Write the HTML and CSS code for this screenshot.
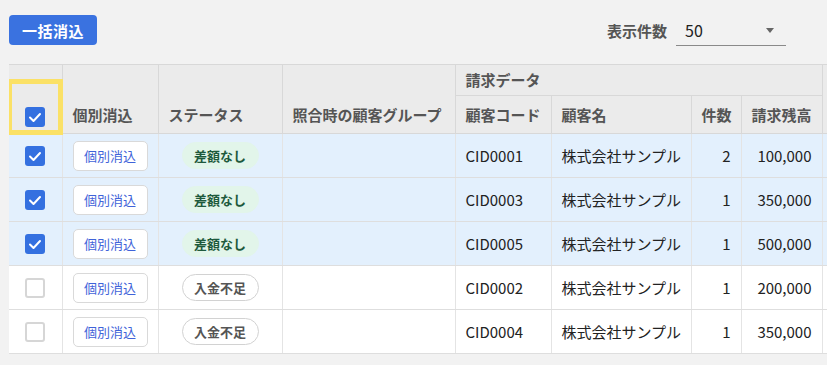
FILE: index.html
```html
<!DOCTYPE html>
<html lang="ja">
<head>
  <meta charset="UTF-8">
  <title>消込</title>
  <link rel="stylesheet" href="styles.css">
</head>
<body>
<div class="page">
  <div class="toolbar">
    <button class="bulk-btn">一括消込</button>
    <div class="per-page">
      <span class="per-page-label">表示件数</span>
      <div class="select">
        <span>50</span>
        <span class="caret"></span>
      </div>
    </div>
  </div>

  <div class="table-wrap">
    <table class="recon">
      <colgroup>
        <col style="width:53px">
        <col style="width:96px">
        <col style="width:124px">
        <col style="width:173px">
        <col style="width:96px">
        <col style="width:140px">
        <col style="width:50px">
        <col style="width:81px">
        <col style="width:100px">
      </colgroup>
      <thead>
        <tr class="head-top">
          <th rowspan="2" class="col-check">
            <span class="highlight"></span>
            <span class="cb checked"><svg viewBox="0 0 20 20"><polyline points="5,10.5 8.5,14 15,7"/></svg></span>
          </th>
          <th rowspan="2" class="bottom">個別消込</th>
          <th rowspan="2" class="bottom">ステータス</th>
          <th rowspan="2" class="bottom">照合時の顧客グループ</th>
          <th colspan="4" class="group">請求データ</th>
          <th rowspan="2"></th>
        </tr>
        <tr class="head-sub">
          <th class="bottom">顧客コード</th>
          <th class="bottom">顧客名</th>
          <th class="bottom num">件数</th>
          <th class="bottom num">請求残高</th>
        </tr>
      </thead>
      <tbody>
        <tr class="selected">
          <td class="col-check"><span class="cb checked"><svg viewBox="0 0 20 20"><polyline points="5,10.5 8.5,14 15,7"/></svg></span></td>
          <td class="center"><button class="row-btn">個別消込</button></td>
          <td class="center"><span class="badge ok">差額なし</span></td>
          <td></td>
          <td>CID0001</td>
          <td>株式会社サンプル</td>
          <td class="num">2</td>
          <td class="num">100,000</td>
          <td></td>
        </tr>
        <tr class="selected">
          <td class="col-check"><span class="cb checked"><svg viewBox="0 0 20 20"><polyline points="5,10.5 8.5,14 15,7"/></svg></span></td>
          <td class="center"><button class="row-btn">個別消込</button></td>
          <td class="center"><span class="badge ok">差額なし</span></td>
          <td></td>
          <td>CID0003</td>
          <td>株式会社サンプル</td>
          <td class="num">1</td>
          <td class="num">350,000</td>
          <td></td>
        </tr>
        <tr class="selected">
          <td class="col-check"><span class="cb checked"><svg viewBox="0 0 20 20"><polyline points="5,10.5 8.5,14 15,7"/></svg></span></td>
          <td class="center"><button class="row-btn">個別消込</button></td>
          <td class="center"><span class="badge ok">差額なし</span></td>
          <td></td>
          <td>CID0005</td>
          <td>株式会社サンプル</td>
          <td class="num">1</td>
          <td class="num">500,000</td>
          <td></td>
        </tr>
        <tr>
          <td class="col-check"><span class="cb"></span></td>
          <td class="center"><button class="row-btn">個別消込</button></td>
          <td class="center"><span class="badge short">入金不足</span></td>
          <td></td>
          <td>CID0002</td>
          <td>株式会社サンプル</td>
          <td class="num">1</td>
          <td class="num">200,000</td>
          <td></td>
        </tr>
        <tr>
          <td class="col-check"><span class="cb"></span></td>
          <td class="center"><button class="row-btn">個別消込</button></td>
          <td class="center"><span class="badge short">入金不足</span></td>
          <td></td>
          <td>CID0004</td>
          <td>株式会社サンプル</td>
          <td class="num">1</td>
          <td class="num">350,000</td>
          <td></td>
        </tr>
      </tbody>
    </table>
  </div>
</div>
</body>
</html>
```

FILE: styles.css
```css
* {
  margin: 0;
  padding: 0;
  box-sizing: border-box;
}
body {
  background-color: #f2f2f2;
  font-family: "Noto Sans CJK JP", "Noto Sans", sans-serif;
  color: #222;
  overflow: hidden;
}

.page {
  padding: 15px 0 0 9px;
}

/* 上のツールバー */
.toolbar {
  width: 777px;
  height: 30px;
  display: flex;
  justify-content: space-between;
  align-items: center;
}
.bulk-btn {
  height: 30px;
  padding: 0 13px;
  border: none;
  border-radius: 4px;
  background-color: #3a72e0;
  color: #fff;
  font-family: inherit;
  font-size: 15px;
  font-weight: 700;
  letter-spacing: 0.5px;
}
.per-page {
  display: flex;
  align-items: center;
  gap: 9px;
}
.per-page-label {
  font-size: 15px;
  font-weight: 700;
  color: #555;
}
.select {
  width: 110px;
  height: 31px;
  padding: 0 12px 0 9px;
  border-bottom: 1px solid #8a8a8a;
  display: flex;
  justify-content: space-between;
  align-items: center;
  font-size: 16px;
  color: #222;
  margin-top: 1px;
}
.caret {
  width: 0;
  height: 0;
  border-left: 4px solid transparent;
  border-right: 4px solid transparent;
  border-top: 5px solid #666;
}

/* テーブル */
.table-wrap {
  margin-top: 19px;
  overflow: hidden;
}
.recon {
  table-layout: fixed;
  width: 913px;
  border-collapse: collapse;
  font-size: 15px;
}
.recon th {
  background-color: #ebebeb;
  border: 1px solid #d8d8d8;
  border-left: none;
  color: #555;
  font-weight: 700;
  text-align: left;
  padding: 0 10px;
  line-height: 20px;
  white-space: nowrap;
}
.recon th.bottom {
  vertical-align: bottom;
  padding-bottom: 8px;
}
.recon th.num,
.recon td.num {
  text-align: right;
}
.head-top th.group {
  height: 31px;
  vertical-align: middle;
}
.head-sub th {
  height: 38px;
}
.recon th.col-check {
  position: relative;
  vertical-align: bottom;
  padding: 0 0 6px;
}
.recon td {
  height: 44px;
  padding: 0 10px;
  border-bottom: 1px solid #dedede;
  border-right: 1px solid #e4e4e4;
  background-color: #fff;
  white-space: nowrap;
}
.recon tr.selected td {
  background-color: #e3f0fd;
}
.recon td.center {
  text-align: center;
  padding: 0;
}
.recon td.col-check {
  padding: 0;
}

/* チェックボックス */
.cb {
  display: block;
  width: 20px;
  height: 20px;
  margin: 0 auto;
  border: 2px solid #d6d6d6;
  border-radius: 3px;
  background-color: #fff;
}
.cb.checked {
  border: none;
  background-color: #3470e0;
}
.cb svg {
  display: block;
  width: 20px;
  height: 20px;
}
.cb polyline {
  fill: none;
  stroke: #fff;
  stroke-width: 2;
  stroke-linecap: round;
  stroke-linejoin: round;
}

/* 黄色の枠（注目箇所） */
.highlight {
  position: absolute;
  left: -2px;
  top: 14px;
  width: 56px;
  height: 56px;
  border: 5px solid #fbe166;
}

.row-btn {
  width: 75px;
  height: 30px;
  border: 1px solid #d9d9d9;
  border-radius: 5px;
  background-color: #fff;
  color: #3f63d9;
  font-family: inherit;
  font-size: 13px;
}
.badge {
  display: inline-block;
  width: 77px;
  height: 27px;
  line-height: 25px;
  border-radius: 14px;
  font-size: 13px;
  font-weight: 700;
  text-align: center;
}
.badge.ok {
  background-color: #e2f5ea;
  color: #1e5a3c;
  border: 1px solid #e2f5ea;
}
.badge.short {
  background-color: #fff;
  color: #555;
  border: 1px solid #d2d2d2;
}
```
